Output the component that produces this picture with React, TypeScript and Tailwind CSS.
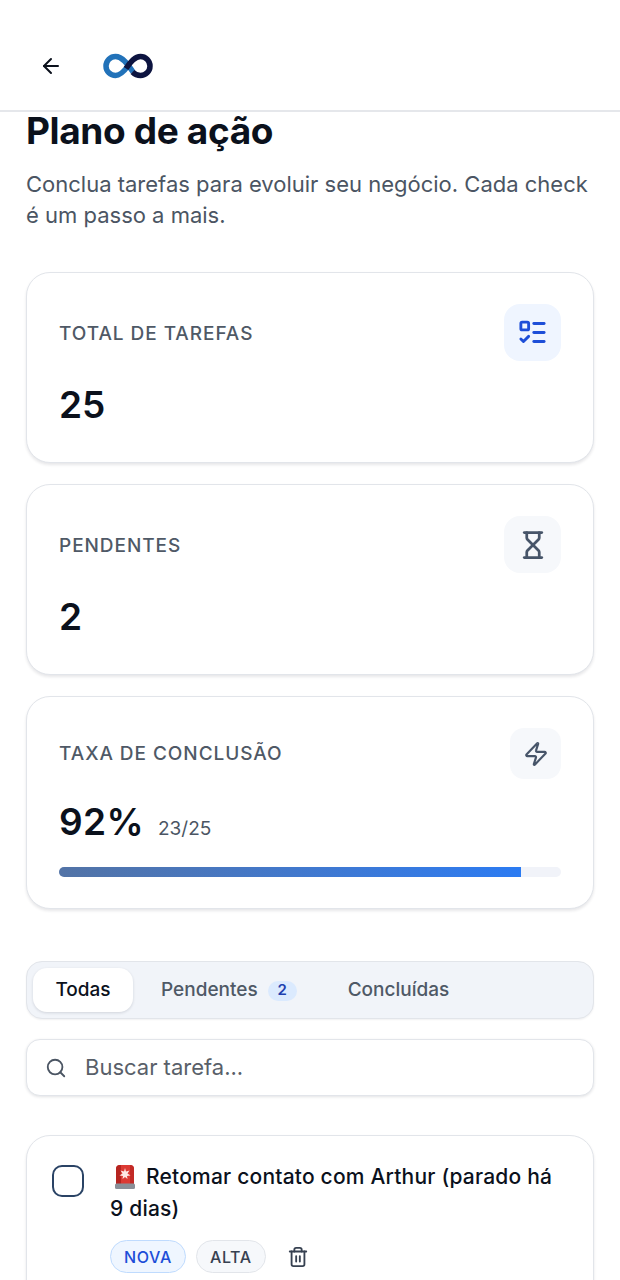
import { ArrowLeft, Hourglass, ListTodo, Search, Trash2, Zap } from "lucide-react";

/* ─── Brand mark: two-tone infinity loop ─── */
function InfinityLogo() {
  return (
    <svg width="50" height="26" viewBox="0 0 50 26" fill="none">
      <path
        d="M30 19C26 13 20 3.500 12.500 3.500C7.500 3.500 3 7.500 3 13C3 18.500 7.500 22.500 12.500 22.500C17.500 22.500 21 18.500 25 13"
        stroke="#2272b9"
        strokeWidth="5.500"
      />
      <path
        d="M23 15.500C28 8 32 3.500 37.500 3.500C42.500 3.500 47 7.500 47 13C47 18.500 42.500 22.500 37.500 22.500C34 22.500 31.500 21 29.500 19"
        stroke="#0d1440"
        strokeWidth="5.500"
      />
    </svg>
  );
}

/* ─── Red siren shown in front of the task title ─── */
function SirenGlyph() {
  return (
    <svg width="24" height="27" viewBox="0 0 24 27" className="inline-block align-[-6px]">
      <path d="M3 21V6a4 4 0 0 1 4-4h10a4 4 0 0 1 4 4v15z" fill="#dc3a34" />
      <path d="M3 21V6a4 4 0 0 1 4-4h1v19z" fill="#b52420" />
      <path d="M17 21V2a4 4 0 0 1 4 4v15z" fill="#c22a26" />
      <path
        d="M12 5l1 3.500 3.500-1-2 3 3 2-3.500.5.5 3-2.500-2-2.500 2 .5-3-3.500-.5 3-2-2-3 3.500 1z"
        fill="#fde8e4"
      />
      <rect x="2" y="20.500" width="20" height="5.500" rx="1.500" fill="#8a8f98" />
    </svg>
  );
}

function StatCard({
  label,
  value,
  icon,
}: {
  label: string;
  value: string;
  icon: React.ReactNode;
}) {
  return (
    <div className="h-[191px] rounded-[24px] border border-[#e2e5ea] bg-white px-[32px] pt-[31px] shadow-[0_2px_3px_rgba(15,23,42,0.10)]">
      <div className="flex items-start justify-between">
        <span className="mt-[17px] text-[19px] leading-[26px] font-medium tracking-[0.05em] text-[#4f5966] uppercase">
          {label}
        </span>
        {icon}
      </div>
      <div className="mt-[21px] text-[37px] leading-[46px] font-semibold text-[#0b111c]">
        {value}
      </div>
    </div>
  );
}

export default function App() {
  return (
    <div className="h-[1280px] overflow-hidden bg-white font-['Inter',sans-serif]">
      {/* Top bar */}
      <header className="flex h-[112px] items-center gap-[40px] border-b-2 border-[#e5e7eb] pt-[21px] pl-[39px]">
        <ArrowLeft size={24} strokeWidth={2} className="text-[#0b111c]" />
        <InfinityLogo />
      </header>

      <main className="px-[26px]">
        <h1 className="text-[37px] leading-[38px] font-bold tracking-[-0.01em] text-[#0b111c]">
          Plano de ação
        </h1>
        <p className="mt-[19px] text-[22px] leading-[31px] text-[#4b5563]">
          Conclua tarefas para evoluir seu negócio. Cada check é um passo a mais.
        </p>

        {/* Summary cards */}
        <div className="mt-[41px] flex flex-col gap-[21px]">
          <StatCard
            label="Total de tarefas"
            value="25"
            icon={
              <div className="flex h-[57px] w-[57px] items-center justify-center rounded-[16px] bg-[#eff5ff]">
                <ListTodo size={31} strokeWidth={2.2} className="text-[#1d4ed8]" />
              </div>
            }
          />
          <StatCard
            label="Pendentes"
            value="2"
            icon={
              <div className="flex h-[57px] w-[57px] items-center justify-center rounded-[16px] bg-[#f6f8fb]">
                <Hourglass size={30} strokeWidth={2.2} className="text-[#475569]" />
              </div>
            }
          />

          <div className="h-[213px] rounded-[24px] border border-[#e2e5ea] bg-white px-[32px] pt-[31px] shadow-[0_2px_3px_rgba(15,23,42,0.10)]">
            <div className="flex items-start justify-between">
              <span className="mt-[13px] text-[19px] leading-[26px] font-medium tracking-[0.05em] text-[#4f5966] uppercase">
                Taxa de conclusão
              </span>
              <div className="flex h-[51px] w-[51px] items-center justify-center rounded-[14px] bg-[#f6f8fb]">
                <Zap size={26} strokeWidth={2} className="text-[#475569]" />
              </div>
            </div>
            <div className="mt-[20px] flex items-baseline gap-[14px]">
              <span className="text-[37px] leading-[46px] font-semibold tracking-[0.01em] text-[#0b111c]">
                92%
              </span>
              <span className="text-[19px] text-[#4b5563]">23/25</span>
            </div>
            <div className="mt-[22px] h-[10px] rounded-full bg-[#f1f3f9]">
              <div
                className="h-full rounded-l-full bg-gradient-to-r from-[#5273a6] to-[#2b7bf2]"
                style={{ width: "92%" }}
              />
            </div>
          </div>
        </div>

        {/* Filter tabs */}
        <div className="mt-[52px] flex h-[58px] items-center gap-[4px] rounded-[16px] border border-[#e2e5ea] bg-[#f1f4f9] px-[6px] shadow-[0_1px_2px_rgba(15,23,42,0.06)]">
          <div className="flex h-[44px] w-[100px] items-center justify-center rounded-[14px] bg-white pt-[1px] text-[19px] font-medium text-[#0b111c] shadow-[0_1px_3px_rgba(15,23,42,0.14)]">
            Todas
          </div>
          <div className="flex h-[44px] items-center gap-[10px] px-[24px] pt-[1px] text-[19px] font-medium text-[#4f5966]">
            Pendentes
            <span className="flex h-[20px] w-[29px] items-center justify-center rounded-full bg-[#dbeafe] text-[15px] font-semibold text-[#1e40af]">
              2
            </span>
          </div>
          <div className="flex h-[44px] items-center px-[23px] pt-[1px] text-[19px] font-medium text-[#4f5966]">
            Concluídas
          </div>
        </div>

        {/* Search */}
        <div className="mt-[20px] flex h-[57px] items-center gap-[18px] rounded-[14px] border border-[#e2e5ea] bg-white pl-[18px] shadow-[0_1px_3px_rgba(15,23,42,0.12)]">
          <Search size={22} strokeWidth={2} className="text-[#4b5563]" />
          <span className="text-[22px] text-[#595f69]">Buscar tarefa...</span>
        </div>

        {/* Task card, runs past the fold */}
        <div className="mt-[39px] flex h-[240px] gap-[26px] rounded-[24px] border border-[#e2e5ea] bg-white pt-[29px] pr-[26px] pl-[25px] shadow-[0_2px_3px_rgba(15,23,42,0.10)]">
          <div className="h-[32px] w-[32px] shrink-0 rounded-[10px] border-2 border-[#2a4365] bg-white" />
          <div className="-mt-[4px] min-w-0">
            <p className="text-[21px] leading-[32px] font-medium tracking-[0.2px] text-[#0b111c]">
              <span className="mr-[9px] ml-[3px]">
                <SirenGlyph />
              </span>
              Retomar contato com Arthur (parado há 9 dias)
            </p>
            <div className="mt-[15px] flex items-center gap-[10px]">
              <span className="flex h-[33px] items-center rounded-full border border-[#bfdbfe] bg-[#eff6ff] px-[13px] text-[16px] font-medium tracking-[0.04em] text-[#1d4ed8]">
                NOVA
              </span>
              <span className="flex h-[33px] items-center rounded-full border border-[#e2e5ea] bg-[#f6f8fb] px-[13px] text-[16px] font-medium tracking-[0.04em] text-[#374151]">
                ALTA
              </span>
              <Trash2 size={22} strokeWidth={2} className="ml-[11px] text-[#374151]" />
            </div>
          </div>
        </div>
      </main>
    </div>
  );
}
